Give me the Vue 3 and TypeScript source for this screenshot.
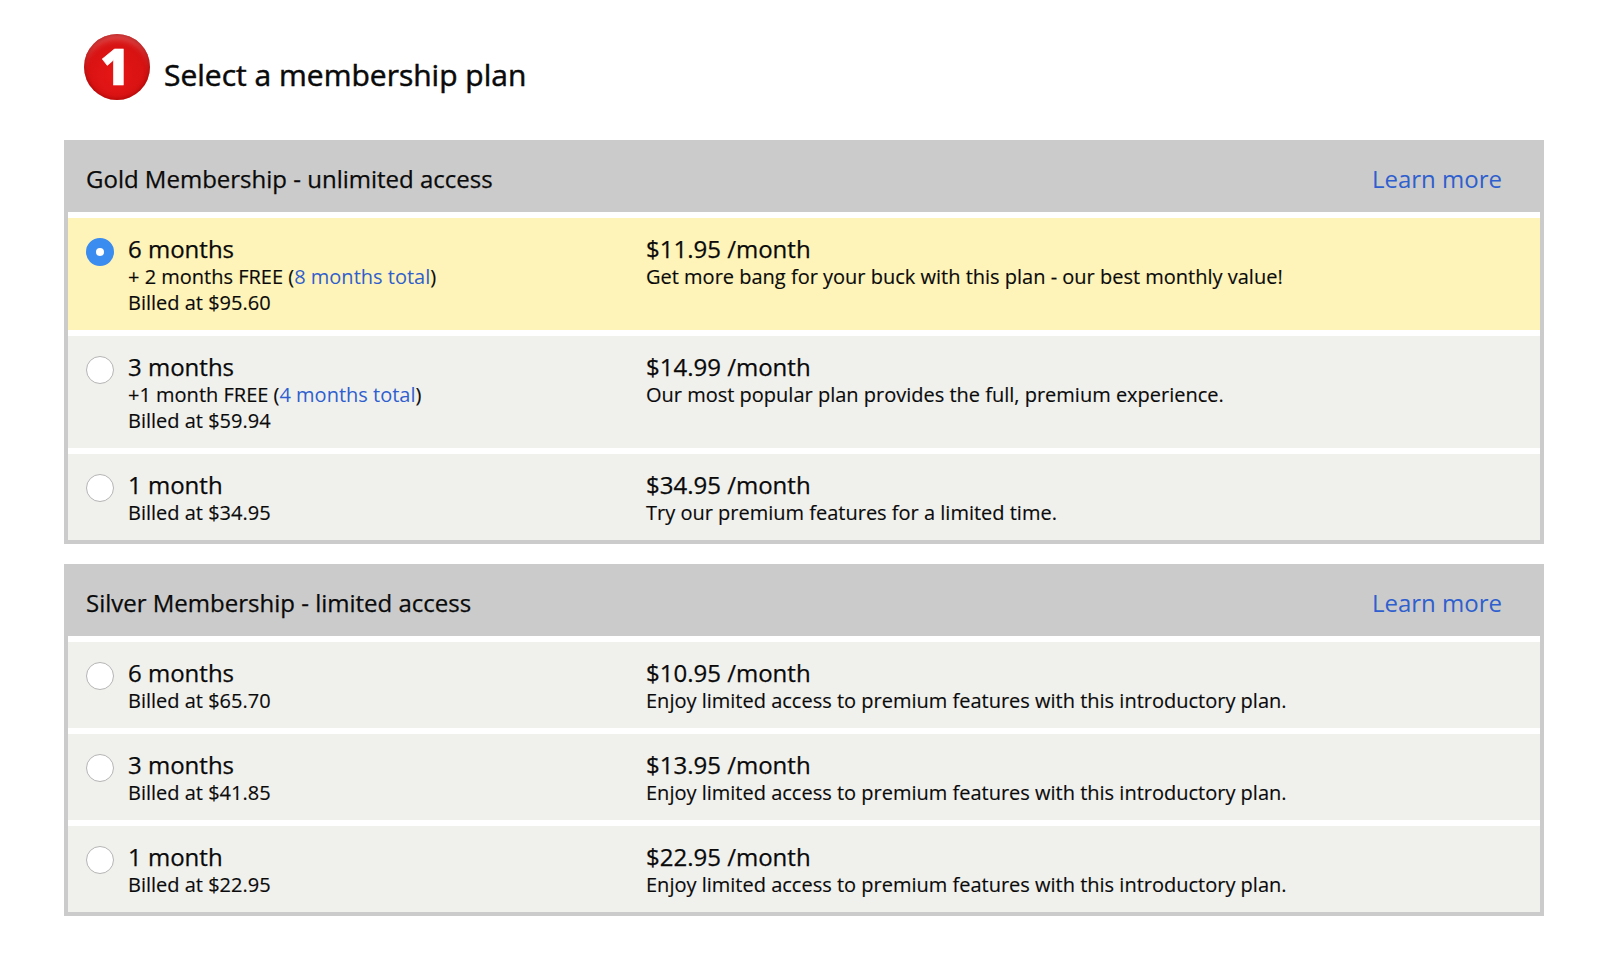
<script setup lang="ts">
interface Plan {
  term: string
  extra?: string
  total?: string
  billed: string
  price: string
  desc: string
  selected?: boolean
  height: number
}
interface Group {
  title: string
  plans: Plan[]
}
const intro = 'Enjoy limited access to premium features with this introductory plan.'
const groups: Group[] = [
  {
    title: 'Gold Membership - unlimited access',
    plans: [
      { term: '6 months', extra: '+ 2 months FREE', total: '8 months total', billed: 'Billed at $95.60', price: '$11.95 /month', desc: 'Get more bang for your buck with this plan - our best monthly value!', selected: true, height: 112 },
      { term: '3 months', extra: '+1 month FREE', total: '4 months total', billed: 'Billed at $59.94', price: '$14.99 /month', desc: 'Our most popular plan provides the full, premium experience.', height: 112 },
      { term: '1 month', billed: 'Billed at $34.95', price: '$34.95 /month', desc: 'Try our premium features for a limited time.', height: 86 },
    ],
  },
  {
    title: 'Silver Membership - limited access',
    plans: [
      { term: '6 months', billed: 'Billed at $65.70', price: '$10.95 /month', desc: intro, height: 86 },
      { term: '3 months', billed: 'Billed at $41.85', price: '$13.95 /month', desc: intro, height: 86 },
      { term: '1 month', billed: 'Billed at $22.95', price: '$22.95 /month', desc: intro, height: 86 },
    ],
  },
]
</script>

<template>
  <main class="page">
    <header class="step">
      <span class="badge">1</span>
      <h1 class="step-title">Select a membership plan</h1>
    </header>
    <section v-for="g in groups" :key="g.title" class="panel">
      <div class="panel-head">
        <h2 class="panel-title">{{ g.title }}</h2>
        <a class="learn">Learn more</a>
      </div>
      <div class="rows">
        <div
          v-for="p in g.plans"
          :key="p.term"
          class="row"
          :class="{ selected: p.selected }"
          :style="{ height: p.height + 'px' }"
        >
          <span class="radio" :class="{ on: p.selected }"></span>
          <div class="term">
            <div class="big">{{ p.term }}</div>
            <div v-if="p.extra" class="small">{{ p.extra }} (<a class="link">{{ p.total }}</a>)</div>
            <div class="small">{{ p.billed }}</div>
          </div>
          <div class="info">
            <div class="big">{{ p.price }}</div>
            <div class="small">{{ p.desc }}</div>
          </div>
        </div>
      </div>
    </section>
  </main>
</template>

<style scoped>
.page {
  width: 1480px;
  height: 973px;
  margin-left: 64px;
  overflow: hidden;
  font-family: "Open Sans", sans-serif;
  color: #0a0a0a;
}
.step {
  display: flex;
  align-items: flex-start;
  height: 140px;
  padding: 34px 0 0 20px;
  box-sizing: border-box;
}
.badge {
  width: 66px;
  height: 66px;
  flex: none;
  border-radius: 50%;
  display: flex;
  align-items: center;
  justify-content: center;
  background: radial-gradient(circle at 45% 62%, #e61616 0%, #d81212 55%, #c20e0e 100%);
  box-shadow: inset 0 0 4px 1px rgba(140, 0, 0, 0.6), inset 0 8px 7px -3px rgba(255, 170, 170, 0.45);
  color: #fff;
  font-family: "Open Sans", sans-serif;
  font-size: 50px;
  font-weight: 800;
  line-height: 1;
  padding: 0 4px 3px 0;
  box-sizing: border-box;
  -webkit-text-stroke: 0.5px #fff;
}
.step-title {
  margin: 21px 0 0 14px;
  font-size: 30px;
  line-height: 40px;
  font-weight: 400;
  -webkit-text-stroke: 0.5px #0a0a0a;
}
.panel {
  background: #cbcbcb;
  padding: 0 4px 4px;
  margin-bottom: 20px;
}
.panel-head {
  height: 72px;
  display: flex;
  align-items: center;
  justify-content: space-between;
  padding: 5px 38px 0 18px;
  box-sizing: border-box;
}
.panel-title {
  margin: 0;
  font-size: 24px;
  font-weight: 400;
  line-height: 32px;
  -webkit-text-stroke: 0.25px #0a0a0a;
}
.learn {
  font-size: 24px;
  line-height: 32px;
  color: #2f5fce;
}
.rows {
  display: flex;
  flex-direction: column;
  gap: 6px;
  padding-top: 6px;
  background: #fff;
}
.row {
  display: flex;
  background: #f0f0ed;
  padding: 16px 18px 0;
  box-sizing: border-box;
}
.row.selected {
  background: #fef3b8;
}
.radio {
  width: 28px;
  height: 28px;
  margin-top: 4px;
  flex: none;
  box-sizing: border-box;
  border-radius: 50%;
  background: #fff;
  border: 1.5px solid #b5b5b5;
}
.radio.on {
  border: 10px solid #3a8cf0;
}
.term {
  width: 518px;
  margin-left: 14px;
  flex: none;
}
.big {
  font-size: 24px;
  line-height: 30px;
  -webkit-text-stroke: 0.25px #0a0a0a;
}
.small {
  font-size: 20px;
  line-height: 26px;
  -webkit-text-stroke: 0.15px #0a0a0a;
}
.link {
  color: #2f5fce;
  -webkit-text-stroke: 0;
}
</style>
